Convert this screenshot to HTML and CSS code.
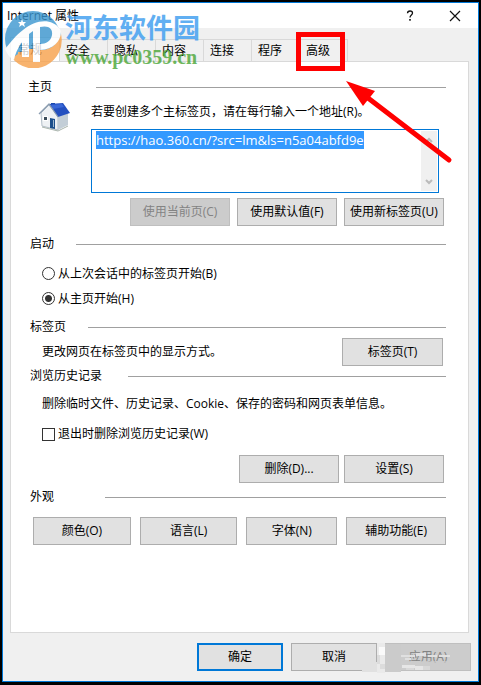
FILE: index.html
```html
<!DOCTYPE html>
<html lang="zh-CN">
<head>
<meta charset="utf-8">
<meta name="viewport" content="width=device-width, initial-scale=1">
<title>Internet 属性</title>
<link rel="stylesheet" href="styles.css">
</head>
<body>
<main class="window">
  <header class="titlebar">
    <h1>Internet 属性</h1>
    <button class="caption" type="button" aria-label="帮助"><svg width="12" height="12" viewBox="0 0 12 12"><path d="M3.5 3.2C3.6 1.7 4.6 1 6 1c1.500 0 2.500.8 2.500 2.100C8.500 5 6 5 6 7.500" fill="none" stroke="#111" stroke-width="1.300"/><rect x="5.200" y="9" width="1.600" height="1.700" fill="#111"/></svg></button>
    <button class="caption" type="button" aria-label="关闭"><svg width="12" height="12" viewBox="0 0 12 12"><path d="M1 1l10 10M11 1L1 11" stroke="#111" stroke-width="1.200"/></svg></button>
  </header>

  <nav class="tabs">
    <button class="tab tab-active" type="button">常规</button>
    <button class="tab" type="button">安全</button>
    <button class="tab" type="button">隐私</button>
    <button class="tab" type="button">内容</button>
    <button class="tab" type="button">连接</button>
    <button class="tab" type="button">程序</button>
    <button class="tab tab-marked" type="button">高级
      <svg class="arrow" width="112" height="90" viewBox="0 0 112 90" aria-hidden="true"><path d="M26 17L107 79" stroke="#f00" stroke-width="5" stroke-linecap="round"/><path d="M4 0L33 10L21 25Z" fill="#f00"/></svg>
    </button>
  </nav>

  <form class="panel">
    <section class="group home">
      <h2>主页</h2>
      <div class="home-grid">
        <svg class="house" width="34" height="30" viewBox="0 0 34 30" aria-hidden="true">
          <path d="M13 4V1h4v4z" fill="#1648a8"/>
          <path d="M3 11L11 3l9 11v14L4 24z" fill="#eef1f4" stroke="#b3bec8"/>
          <path d="M20 14l10-3v12l-10 5z" fill="#c3ced7"/>
          <path d="M11 2l14-1 7 10-12 4z" fill="#2450c0"/>
          <path d="M13 3l11-1 2 3-11 2z" fill="#3a68d8"/>
          <path d="M1 12l10-10 9 13" fill="none" stroke="#8a9cb0" stroke-width="1.300"/>
          <path d="M5 14h5v5H5z" fill="#fff"/><path d="M6 15h3v3H6z" fill="#3c4d5a"/>
          <path d="M12 16l5 1v10l-5-1z" fill="#1c4f8c"/><path d="M15 18l1 0v7l-1 0z" fill="#9fb8d0"/>
          <path d="M4 25l16 4 10-5" fill="none" stroke="#a9b4ac" stroke-width="1"/>
        </svg>
        <label for="address">若要创建多个主标签页，请在每行输入一个地址(R)。</label>
        <div class="address-box">
          <textarea id="address" spellcheck="false">https://hao.360.cn/?src=lm&amp;ls=n5a04abfd9e</textarea>
          <div class="scrollbar" aria-hidden="true">
            <svg width="8" height="6" viewBox="0 0 8 6"><path d="M1 5l3-3 3 3" fill="none" stroke="#bbb" stroke-width="2"/></svg>
            <svg width="8" height="6" viewBox="0 0 8 6"><path d="M1 1l3 3 3-3" fill="none" stroke="#bbb" stroke-width="2"/></svg>
          </div>
        </div>
      </div>
      <div class="actions actions-home">
        <button class="btn" type="button" disabled>使用当前页(C)</button>
        <button class="btn" type="button">使用默认值(F)</button>
        <button class="btn" type="button">使用新标签页(U)</button>
      </div>
    </section>

    <section class="group startup">
      <h2>启动</h2>
      <div class="choices">
        <label><input type="radio" name="start">从上次会话中的标签页开始(B)</label>
        <label><input type="radio" name="start" checked>从主页开始(H)</label>
      </div>
    </section>

    <section class="group tabpages">
      <h2>标签页</h2>
      <div class="tabpages-row">
        <p>更改网页在标签页中的显示方式。</p>
        <button class="btn" type="button">标签页(T)</button>
      </div>
    </section>

    <section class="group history">
      <h2>浏览历史记录</h2>
      <p>删除临时文件、历史记录、Cookie、保存的密码和网页表单信息。</p>
      <label><input type="checkbox">退出时删除浏览历史记录(W)</label>
      <div class="actions">
        <button class="btn" type="button">删除(D)...</button>
        <button class="btn" type="button">设置(S)</button>
      </div>
    </section>

    <section class="group looks">
      <h2>外观</h2>
      <div class="looks-row">
        <button class="btn" type="button">颜色(O)</button>
        <button class="btn" type="button">语言(L)</button>
        <button class="btn" type="button">字体(N)</button>
        <button class="btn" type="button">辅助功能(E)</button>
      </div>
    </section>
  </form>

  <footer class="footer">
    <button class="btn btn-default" type="button">确定</button>
    <button class="btn" type="button">取消</button>
    <button class="btn" type="button" disabled>应用(A)</button>
    <svg class="smudge" width="92" height="32" viewBox="0 0 92 32" aria-hidden="true">
      <path d="M0 19h16v10H0z" fill="#e1e1e1"/><path d="M15 0h8v30h-8z" fill="#eaeaea"/>
      <path d="M17 4h6v8h-6z" fill="#fafafa"/><path d="M15 12h3v9h-3zM18 21h5v5h-5z" fill="#dcdcdc"/>
      <path d="M23 1h16v28H23z" fill="#cbcbcb"/>
      <path d="M39 12h14v2H39zM54 10h10v3H54zM66 12h9v2h-9zM77 12h11v2H77zM43 15h6v2h-6z" fill="#e0e0e0"/>
      <path d="M40 22h13v3H40zM53 23h8v4h-8z" fill="#e6e6e6"/><path d="M61 23h7v4h-7zM44 25h8v2h-8z" fill="#d8d8d8"/>
      <path d="M46 18h42v3H46z" fill="#ccc" opacity=".7"/>
    </svg>
  </footer>

  <div class="watermark">
    <svg width="58" height="58" viewBox="0 0 58 58" aria-hidden="true">
      <circle cx="29" cy="29" r="28" fill="#3b97d0"/>
      <path d="M57 24A28 28 0 0 1 8 48L20 40H40C50 38 54 32 57 24Z" fill="#f7a14b"/>
      <path d="M1 39C7 32 11 26 19 20 32 9 48 8 56 19 59 28 52 39 36 40V52h-7V22C20 27 12 39 10 50 6 48 3 44 1 39Z" fill="#fff"/>
      <path d="M36 17C44 15 49 18 48 25 47 31 42 34 36 34Z" fill="#3b97d0"/>
      <path d="M12 31l8-8h5v24h-7V30z" fill="#fff"/>
      <path d="M25 24l4-3v13h-4z" fill="#3b97d0"/>
      <path d="M25 39h4v12h-4zM14 42h4v10l-4-2z" fill="#f7a14b"/>
      <path d="M18 9l1 3 3 0-2 2 1 3-3-2-3 2 1-3-2-2 3 0z" fill="#fff"/>
    </svg>
    <div class="brand">
      <span class="brand-name">河东软件园</span>
      <span class="brand-url">www.pc0359.cn</span>
    </div>
  </div>
</main>
<script src="script.js"></script>
</body>
</html>
```
FILE: styles.css
```css
*, *::after {
  box-sizing: border-box;
}

body {
  margin: 0;
  padding: 2px 2px 3px;
  min-height: 100vh;
  display: flex;
  background: #000;
  color: #000;
  font: 12px/16px "Open Sans", "Noto Sans CJK SC", sans-serif;
}

h1, h2, p {
  margin: 0;
  font-size: 12px;
  font-weight: 400;
}

button, textarea {
  font: inherit;
  color: inherit;
}

.window {
  position: relative;
  flex: 1;
  display: flex;
  flex-direction: column;
  min-width: 0;
  border: 1px solid #0078d7;
  background: #f0f0f0;
}

.titlebar {
  display: flex;
  align-items: center;
  height: 25px;
  padding: 0 17px 0 4px;
  background: #fff;
}

.titlebar h1 {
  flex: 1;
}

.caption {
  display: flex;
  padding: 0;
  border: 0;
  background: none;
}

.caption + .caption {
  margin-left: 33px;
}

.tabs {
  display: flex;
  align-items: flex-end;
  height: 33px;
  padding-left: 7px;
}

.tab {
  position: relative;
  width: 48px;
  height: 22px;
  padding: 0 0 0 6px;
  border: 1px solid #d9d9d9;
  border-width: 1px 1px 0 0;
  background: #f0f0f0;
  text-align: left;
}

.tab-active {
  width: 50px;
  height: 24px;
  padding-left: 7px;
  border-left-width: 1px;
  background: #fff;
}

.tab-marked::after {
  content: "";
  position: absolute;
  top: -8px;
  left: -4px;
  width: 49px;
  height: 39px;
  border: 5px solid #f00;
}

.arrow {
  position: absolute;
  z-index: 2;
  top: 41px;
  left: 42px;
}

.panel {
  flex: 1;
  margin: 0 9px 0 7px;
  padding: 17px 22px 24px 19px;
  border: 1px solid #d9d9d9;
  background: #fff;
}

.group h2 {
  display: flex;
  align-items: center;
  gap: 22px;
}

.group h2::after {
  content: "";
  flex: 1;
  height: 1px;
  background: #a0a0a0;
}

.home h2 {
  gap: 44px;
  margin-left: -2px;
}

.home-grid {
  display: grid;
  grid-template-columns: 34px 1fr;
  column-gap: 19px;
  margin: 7px 7px 5px 8px;
}

.house {
  grid-row: 1 / 3;
}

.home-grid > label {
  line-height: 20px;
  margin-bottom: 7px;
}

.address-box {
  position: relative;
  height: 64px;
}

textarea {
  display: block;
  width: 100%;
  height: 100%;
  padding: 2px 18px 2px 4px;
  border: 1px solid #0078d7;
  outline: 0;
  resize: none;
  overflow: hidden;
  font-size: 13px;
  line-height: 17px;
}

textarea::selection {
  background: #3399ff;
  color: #fff;
}

.scrollbar {
  position: absolute;
  inset: 2px 2px 2px auto;
  width: 16px;
  display: flex;
  flex-direction: column;
  align-items: center;
  justify-content: space-between;
  padding: 6px 0;
  background: #f0f0f0;
}

.btn {
  height: 28px;
  padding: 0;
  border: 1px solid #adadad;
  background: #e1e1e1;
  white-space: nowrap;
}

.btn:disabled {
  border-color: #bfbfbf;
  background: #ccc;
  color: #838383;
}

.actions {
  display: flex;
  justify-content: flex-end;
  gap: 5px;
  margin-right: 2px;
}

.actions-home {
  gap: 7px;
}

.actions .btn {
  width: 100px;
}

.startup {
  margin-top: 10px;
}

.choices {
  margin: 9px 0 8px 12px;
}

.choices label {
  display: flex;
  align-items: center;
  gap: 3px;
  height: 25px;
}

input {
  appearance: none;
  width: 13px;
  height: 13px;
  margin: 0;
  border: 1px solid #333;
  background: #fff;
}

input[type="radio"] {
  border-radius: 50%;
}

input[type="radio"]:checked {
  background: radial-gradient(circle, #333 3px, #fff 4px);
}

.tabpages-row {
  display: flex;
  align-items: center;
  justify-content: space-between;
  margin: 3px 3px 2px 12px;
}

.tabpages-row .btn {
  width: 101px;
}

.history p {
  margin: 12px 0 14px 12px;
}

.history label {
  display: flex;
  align-items: center;
  gap: 3px;
  margin: 0 0 13px 12px;
}

.history h2 {
  gap: 26px;
}

.looks {
  margin-top: 6px;
}

.looks h2 {
  gap: 51px;
}

.looks-row {
  display: grid;
  grid-template-columns: 98fr 98fr 91fr 100fr;
  gap: 9px;
  margin: 12px 0 0 3px;
}

.footer {
  position: relative;
  display: flex;
  justify-content: flex-end;
  gap: 8px;
  padding: 10px 7px;
}

.footer .btn {
  width: 86px;
}

.footer .btn-default {
  border: 2px solid #0078d7;
}

.smudge {
  position: absolute;
  top: 10px;
  right: 24px;
}

.watermark {
  position: absolute;
  top: 7px;
  left: 1px;
  display: flex;
  gap: 3px;
  pointer-events: none;
  opacity: 0.8;
}

.brand {
  display: flex;
  flex-direction: column;
  white-space: nowrap;
}

.brand-name {
  color: #3a9cf0;
  font: 700 27px/34px "Noto Sans CJK SC", sans-serif;
}

.brand-url {
  color: #4aa636;
  font: 700 20px/26px "Liberation Serif", serif;
}
```
FILE: script.js
```js
const address = document.getElementById("address");
address.focus();
address.select();
```
